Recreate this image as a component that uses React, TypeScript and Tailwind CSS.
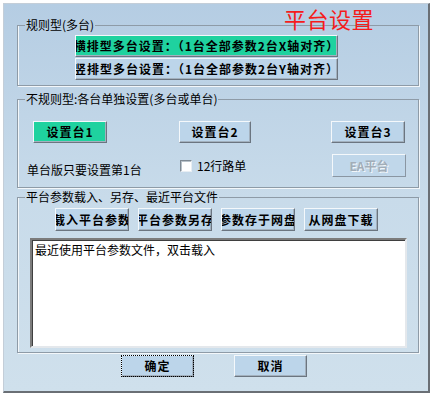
import React from 'react';

const raised =
  'flex items-center justify-center overflow-hidden whitespace-nowrap text-[12px] font-bold tracking-[1px] text-black border border-t-[#f4f8fb] border-l-[#f4f8fb] border-r-[#6b7580] border-b-[#6b7580] shadow-[inset_-1px_-1px_0_#a3b1be]';

function Btn({
  children,
  className = '',
  green = false,
}: {
  children: React.ReactNode;
  className?: string;
  green?: boolean;
}) {
  return (
    <div className={`${raised} ${green ? 'bg-[#1fd29f]' : 'bg-[#bcd5ea]'} ${className}`}>
      <span className="shrink-0">{children}</span>
    </div>
  );
}

function Group({
  title,
  className,
  children,
}: {
  title: string;
  className: string;
  children: React.ReactNode;
}) {
  return (
    <fieldset
      className={`ml-[13px] w-[402px] border border-[#8e9ba7] shadow-[inset_1px_0_0_#f3f7fa,1px_1px_0_#f3f7fa] ${className}`}
    >
      <legend className="ml-[7px] px-[1px] text-[12px] leading-[14px] text-black">{title}</legend>
      {children}
    </fieldset>
  );
}

export default function App() {
  return (
    <div className="w-[435px] h-[396px] bg-white pt-[3px] pl-[3px] font-['Noto_Sans_CJK_SC',sans-serif]">
      <div className="relative w-[427px] h-[390px] border-t border-l border-[#c4ced8] border-r-2 border-b-2 border-r-[#6a6f75] border-b-[#6a6f75] bg-gradient-to-b from-[#b5cde3] via-[#c8dbea] to-[#cfe0ec] flex flex-col">
        {/* title over the first group */}
        <div className="absolute left-[280px] top-[3px] text-[22px] leading-[22px] text-[#f51c1c] tracking-[0.5px]">
          平台设置
        </div>

        {/* 规则型 */}
        <Group title="规则型(多台)" className="mt-[14px] h-[68px]">
          <div className="ml-[57px] mt-[3px] flex flex-col gap-[1px]">
            <Btn green className="w-[263px] h-[22px]">横排型多台设置：（1台全部参数2台X轴对齐）</Btn>
            <Btn className="w-[263px] h-[22px]">竖排型多台设置：（1台全部参数2台Y轴对齐）</Btn>
          </div>
        </Group>

        {/* 不规则型 */}
        <Group title="不规则型:各台单独设置(多台或单台)" className="mt-[6px] h-[96px]">
          <div className="mt-[15px] flex items-center h-[22px]">
            <Btn green className="ml-[15px] w-[74px] h-[22px]">设置台1</Btn>
            <Btn className="ml-[72px] w-[72px] h-[22px]">设置台2</Btn>
            <Btn className="ml-[80px] w-[74px] h-[22px]">设置台3</Btn>
          </div>
          <div className="mt-[11px] flex items-center h-[23px]">
            <span className="ml-[9px] w-[153px] text-[12px] leading-[14px] pt-[8px] text-black">单台版只要设置第1台</span>
            <span className="w-[12px] h-[12px] bg-white border border-t-[#7f8a94] border-l-[#7f8a94] border-r-[#e8eef3] border-b-[#e8eef3] shadow-[inset_1px_1px_0_#b8c2ca] mt-[1px]" />
            <span className="ml-[5px] text-[12px] leading-[14px] text-black mt-[1px]">12行路单</span>
            <div className="ml-auto mr-[12px] w-[74px] h-[23px] flex items-center justify-center text-[12px] font-bold text-[#a2adb8] [text-shadow:1px_1px_0_#f2f6f9] bg-[#c0d7ea] border border-t-[#f4f8fb] border-l-[#f4f8fb] border-r-[#8a96a2] border-b-[#8a96a2]">
              EA平台
            </div>
          </div>
        </Group>

        {/* 文件 */}
        <Group title="平台参数载入、另存、最近平台文件" className="mt-[2px] h-[163px]">
          <div className="mt-[4px] ml-[37px] flex gap-[9px]">
            <Btn className="w-[74px] h-[23px]">载入平台参数</Btn>
            <Btn className="w-[74px] h-[23px]">平台参数另存</Btn>
            <Btn className="w-[74px] h-[23px]">参数存于网盘</Btn>
            <Btn className="w-[74px] h-[23px]">从网盘下载</Btn>
          </div>
          <div className="mt-[7px] ml-[12px] w-[377px] h-[110px] bg-white border-2 border-t-[#7c7c7c] border-l-[#7c7c7c] border-r-[#e4e8ec] border-b-[#e4e8ec] shadow-[inset_1px_1px_0_#3f3f3f] pl-[3px] pt-[3px] text-[12px] leading-[14px] text-black">
            最近使用平台参数文件，双击载入
          </div>
        </Group>

        <div className="mt-[2px] flex">
          <Btn className="ml-[117px] w-[73px] h-[22px] outline-1 outline-dotted outline-black -outline-offset-1">确定</Btn>
          <Btn className="ml-[40px] w-[73px] h-[22px]">取消</Btn>
        </div>
      </div>
    </div>
  );
}
